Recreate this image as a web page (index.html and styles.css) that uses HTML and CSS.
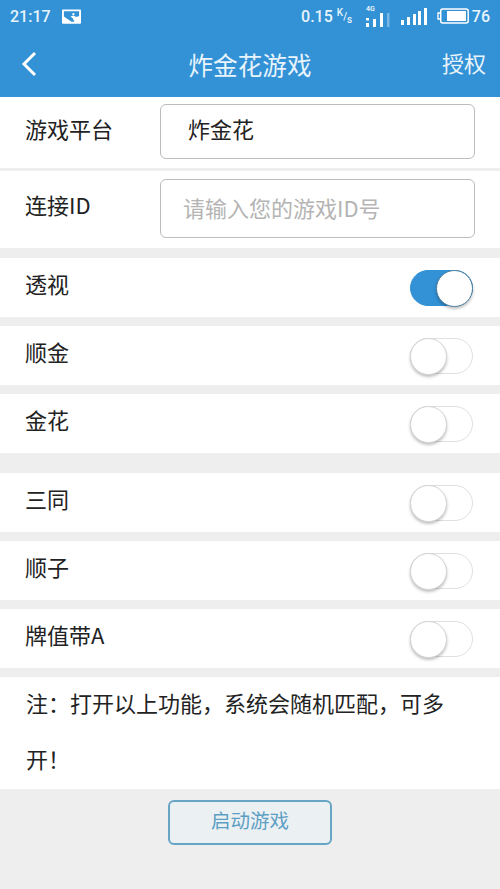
FILE: index.html
```html
<!DOCTYPE html>
<html lang="zh-CN">
<head>
    <meta charset="UTF-8">
    <meta name="viewport" content="width=device-width, initial-scale=1.0">
    <title>炸金花游戏</title>
    <link rel="stylesheet" href="styles.css">
</head>
<body>
    <!-- Header -->
    <div class="header">
        <div class="status-bar">
            <span class="time">21:17</span>
            <svg class="pic-icon" width="19" height="15" viewBox="0 0 20 15">
                <rect width="20" height="15" rx="1" fill="#fff"/>
                <path d="M2 2h16v5l-3 1-3-1.500-3 1 2.500 2 1.500 3.500-3 0-8-5.500z" fill="#3391d6"/>
                <circle cx="12" cy="5" r="1.200" fill="#fff"/>
            </svg>
            <span class="status-right">
                <span class="speed">0.15</span>
                <span class="speed-unit"><sup>K</sup>/<sub>s</sub></span>
                <svg class="net-icon" width="26" height="24" viewBox="0 0 26 24">
                    <text x="1" y="7" class="net-label">4G</text>
                    <rect x="1" y="14" width="3" height="2.500" fill="#fff"/>
                    <rect x="1" y="19" width="3" height="4" fill="#fff"/>
                    <rect x="8" y="15" width="3" height="8" fill="#fff"/>
                    <rect x="15" y="9" width="3" height="14" fill="#fff"/>
                    <rect x="22" y="9" width="2.500" height="14" fill="#fff" opacity=".35"/>
                </svg>
                <svg class="signal-icon" width="26" height="17" viewBox="0 0 26 17">
                    <rect x="0" y="12" width="3" height="5" fill="#fff"/>
                    <rect x="6" y="9" width="3" height="8" fill="#fff"/>
                    <rect x="12" y="6" width="3" height="11" fill="#fff"/>
                    <rect x="17" y="3" width="3" height="14" fill="#fff"/>
                    <rect x="23" y="0" width="3" height="17" fill="#fff"/>
                </svg>
                <svg class="battery-icon" width="32" height="16" viewBox="0 0 32 16">
                    <path d="M3 5H1v6h2" fill="none" stroke="#fff" stroke-width="1.300"/>
                    <rect x="3.700" y="1" width="27.500" height="14" rx="2" fill="none" stroke="#fff" stroke-width="1.500"/>
                    <rect x="10" y="3" width="19" height="10" fill="#fff"/>
                </svg>
                <span class="battery-num">76</span>
            </span>
        </div>
        <div class="title-bar">
            <svg class="back" width="16" height="26" viewBox="0 0 16 26">
                <path d="M14 2L3 13l11 11" fill="none" stroke="#fff" stroke-width="3"/>
            </svg>
            <h1 class="title">炸金花游戏</h1>
            <span class="auth">授权</span>
        </div>
    </div>

    <!-- Form -->
    <div class="row row-platform">
        <label class="label">游戏平台</label>
        <div class="input input-value"><span>炸金花</span></div>
    </div>
    <div class="row row-id">
        <label class="label">连接ID</label>
        <div class="input input-id"><span>请输入您的游戏ID号</span></div>
    </div>

    <!-- Switches -->
    <div class="group">
        <div class="row row-switch"><span class="label">透视</span><span class="switch on"></span></div>
        <div class="row row-switch"><span class="label">顺金</span><span class="switch"></span></div>
        <div class="row row-switch"><span class="label">金花</span><span class="switch"></span></div>
    </div>
    <div class="group">
        <div class="row row-switch"><span class="label">三同</span><span class="switch"></span></div>
        <div class="row row-switch"><span class="label">顺子</span><span class="switch"></span></div>
        <div class="row row-switch"><span class="label">牌值带A</span><span class="switch"></span></div>
    </div>

    <div class="note"><p class="note-text">注：打开以上功能，系统会随机匹配，可多开！</p></div>

    <div class="footer">
        <button class="start" type="button"><span>启动游戏</span></button>
    </div>
</body>
</html>
```

FILE: styles.css
```css
/* Reset CSS */
* {
    margin: 0;
    padding: 0;
    box-sizing: border-box;
}

body {
    font-family: 'Noto Sans CJK SC', 'Roboto', sans-serif;
    background: #eeeeee;
    height: 889px;
    overflow: hidden;
    color: #222;
}

/* Header */
.header {
    height: 97px;
    background: #3391d6;
    color: #e8f4fc;
}

.status-bar {
    height: 32px;
    display: flex;
    align-items: center;
    padding: 0 10px;
    font-family: 'Roboto', sans-serif;
    font-size: 16px;
    font-weight: 500;
}

.pic-icon {
    margin-left: 11px;
}

.status-right {
    margin-left: auto;
    display: flex;
    align-items: center;
}

.speed-unit {
    font-size: 10px;
    margin-left: 4px;
    width: 21px;
}

.speed-unit sup,
.speed-unit sub {
    font-size: 10px;
    line-height: 0;
}

.net-icon {
    margin-left: 7px;
}

.net-label {
    font-size: 7px;
    fill: #fff;
}

.signal-icon {
    margin-left: 10px;
}

.battery-icon {
    margin-left: 10px;
}

.battery-num {
    margin-left: 3px;
}

.title-bar {
    height: 65px;
    display: flex;
    align-items: center;
    justify-content: space-between;
    padding: 0 14px 2px 21px;
}

.title {
    font-size: 24.600px;
    font-weight: 400;
    margin-left: 21px;
}

.auth {
    font-size: 22px;
    margin-top: -4px;
}

/* Rows */
.row {
    display: flex;
    align-items: center;
    background: #fff;
    padding: 0 26px 0 25px;
}

.label {
    font-size: 22px;
    margin-bottom: 6px;
}

.row-platform {
    height: 71px;
    margin-bottom: 3px;
}

.row-platform .label {
    margin-bottom: 10px;
}

.row-id {
    height: 77px;
    margin-bottom: 10px;
}

.row-id .label {
    margin-bottom: 12px;
}

.input {
    width: 315px;
    margin-left: auto;
    margin-right: -1px;
    margin-bottom: 2px;
    display: flex;
    align-items: center;
    background: #fff;
    border: 1.500px solid #bcbcbc;
    border-radius: 6px;
    font-size: 22px;
}

.input-value {
    height: 55px;
    padding-left: 27px;
    padding-bottom: 7px;
}

.input-id {
    height: 59px;
    padding-left: 22px;
    padding-bottom: 4px;
    color: #b4b4b4;
    font-size: 22px;
}

.group {
    display: flex;
    flex-direction: column;
    gap: 9px;
    margin-bottom: 20px;
}

.group + .group {
    margin-bottom: 9px;
}

.row-switch {
    height: 59px;
    justify-content: space-between;
    padding-bottom: 4px;
}

/* Switch */
.switch {
    position: relative;
    width: 63px;
    height: 36px;
    margin-top: 4px;
    margin-right: 1px;
    border: 1.500px solid #e0e0e0;
    border-radius: 18px;
    background: #fff;
}

.switch::after {
    content: "";
    position: absolute;
    left: -1px;
    top: -1px;
    width: 35px;
    height: 35px;
    border-radius: 50%;
    background: #fff;
    border: 1px solid #d4d4d4;
    box-shadow: 0 2px 3px rgba(0, 0, 0, 0.25);
}

.switch.on {
    background: #3391d6;
    border-color: #3391d6;
}

.switch.on::after {
    left: auto;
    right: -1px;
    border-color: #4a7f9f;
}

/* Note */
.note {
    display: flow-root;
    height: 112px;
    background: #fff;
    padding: 0 26px;
    font-size: 22px;
    line-height: 56px;
}

.note-text {
    margin-top: -3px;
}

/* Footer */
.footer {
    display: flex;
    justify-content: center;
    padding-top: 11px;
}

.start {
    width: 164px;
    height: 45px;
    padding-bottom: 6px;
    font-family: inherit;
    font-size: 19.500px;
    color: #5d9fc4;
    background: #ebf0f3;
    border: 2px solid #67a5c7;
    border-radius: 6px;
}
```
